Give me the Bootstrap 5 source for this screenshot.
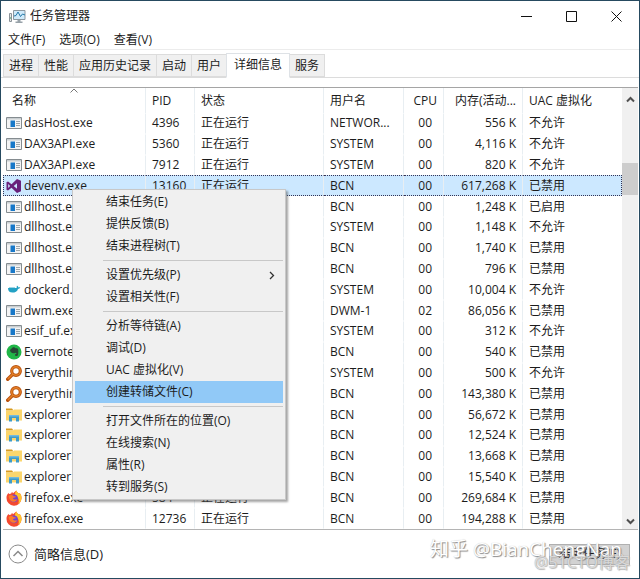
<!DOCTYPE html>
<html lang="zh-CN">
<head>
<meta charset="utf-8">
<meta name="viewport" content="width=device-width, initial-scale=1">
<title>任务管理器</title>
<link href="https://cdn.jsdelivr.net/npm/bootstrap@5.3.0/dist/css/bootstrap.min.css" rel="stylesheet">
<style>
body{font:12px/16px "Open Sans","Noto Sans CJK SC",sans-serif;color:#1c1c1c;background:#fff}
svg{display:block;flex:none}
.tm-window{border:1px solid #264a60}
.tm-title{height:30px;padding-left:8px}
.tm-control{width:45px;height:29px;border:0;background:none;padding:0}
.tm-menubar{height:19px;padding-left:7px;gap:14px;border-bottom:1px solid #ececec}
.tm-menubar a{color:#1c1c1c}
.tm-tabs{height:28px;padding:0 2px;border-bottom:1px solid #dcdcdc}
.tm-tabs .nav-link{height:23px;padding:3px 5px 0;border:1px solid #dcdcdc;border-right-width:0;border-radius:0;color:#1c1c1c;background:#f0f0f0;margin:0;white-space:nowrap}
.tm-tabs .nav-item:last-child .nav-link{border-right-width:1px}
.tm-tabs .nav-link.active{height:25px;padding:3px 7px 0;background:#fff;border-bottom-color:#fff;border-right-width:1px;color:#1c1c1c;margin-bottom:-1px}
.tm-list{margin:9px 1px 0 2px;border-top:1px solid #a5a5a5;border-bottom:1px solid #b4b4b4}
.tm-table{table-layout:fixed;height:441px;border-collapse:separate;border-spacing:0}
.tm-table th,.tm-table td{padding:0 6px;border-right:1px solid #e8eef2;white-space:nowrap;overflow:hidden;font-weight:400}
.tm-table thead th{height:25px;position:relative}
.tm-table thead th:first-child{padding-left:9px}
.tm-table td{border-top:1px dotted transparent;border-bottom:1px dotted transparent}
.tm-table td:first-child{padding-left:2px;border-left:1px dotted transparent}
.tm-table td:last-child,.tm-table th:last-child{border-right-color:transparent}
.tm-table .selected td{background:#cce8ff;border-top-color:#335;border-bottom-color:#335}
.tm-table .selected td:first-child{border-left-color:#335}
.tm-table .selected td:last-child{border-right:1px dotted #335}
.c-name{width:143px}.c-pid{width:49px}.c-state{width:129px}.c-user{width:80px}.c-cpu{width:40px}.c-mem{width:79px}
.tm-table .cpu-cell{padding-right:11px}
.tm-proc{gap:2px}
.tm-sort{position:absolute;left:67px;top:0}
.tm-scroll{flex:none;width:16px;background:#f0f0f0}
.tm-thumb{height:32px;margin-top:60px;background:#cdcdcd}
.tm-footer{height:48px;padding:0 9px 0 7px}
.tm-fewer{font-size:13px;border:0;background:none;padding:0;color:#1c1c1c;gap:6px}
.tm-end{width:81px;height:21px;padding:0;border:1px solid #b0b0b0;background:#d2d2d2;color:#1c1c1c}
.tm-context{left:71px;top:188px;width:214px;padding:1px 2px;background:#f0f0f0;border:1px solid #c8c8c8;box-shadow:2px 2px 2px #5558;z-index:3}
.tm-context button{height:22px;padding:0 8px 0 31px;border:0;background:none;color:#1c1c1c}
.tm-context button.current{background:#91c9f7}
.tm-context hr{margin:3px 0 3px 28px;border-color:#c8c8c8;opacity:1}
.tm-mark{right:17px;bottom:15px;font-size:19px;line-height:28px;color:#fff;text-shadow:1px 1px 1px #888,0 0 1px #bbb;z-index:2;white-space:nowrap}
.tm-mark-two{right:9px;bottom:5px;font-size:16px;line-height:22px;color:#fffa;text-shadow:0 0 1px #888,1px 1px 1px #bbb;z-index:2;white-space:nowrap}
</style>
<script src="https://cdn.jsdelivr.net/npm/bootstrap@5.3.0/dist/js/bootstrap.bundle.min.js"></script>
</head>
<body>
<svg class="d-none" aria-hidden="true">
<symbol id="i-app" viewBox="0 0 16 14"><path d="M.5 1.500h15v11H.5z" fill="#f4f4f4" stroke="#858c90"/><path d="M1 2h14v1.500H1z" fill="#c9ced1"/><path d="M4.500 4.500h4.500v6.500H4.500z" fill="#1878c8"/><path d="M10 5.500h4M10 7.500h4M10 9.500h4" stroke="#9ea7ac"/></symbol>
<symbol id="i-vs" viewBox="0 0 16 14"><path d="M11 0l4 1.700v10.600L11 14 5.500 8.700 2 11.500.5 10.700V3.300L2 2.500l3.500 2.800zM11 4.200L7.700 7 11 9.800zM2.200 5v4L4.100 7z" fill="#68217a" fill-rule="evenodd"/></symbol>
<symbol id="i-docker" viewBox="0 0 16 14"><path d="M2 5h8.500c.5-.9.400-1.300.1-1.900l.7-.3c.7.500 1 1 1 1.600.8-.2 1.500-.1 2 .2-.5.900-1.300 1.300-2.300 1.300C11.300 8.500 9 9.500 6.500 9.500 3.500 9.500 2 8 2 5z" fill="#23a1c4"/><path d="M3 4h6v1H3z" fill="#9fd6e6"/></symbol>
<symbol id="i-ever" viewBox="0 0 16 16"><circle cx="8" cy="8" r="7.500" fill="#20b648"/><path d="M4 6l2.600-2.400C8 3 9 3.600 9.500 4.200c1.800 0 2.600.4 2.700 1.500.3 2.300.1 4.500-.5 5.700-.5 1-2.600 1-2.700-.4 0-1 .8-1.200 1.500-1 .1-.8-.5-1.100-1.300-1.300-.4.800-1.700.7-3 .3C4.900 8.700 4.200 7.500 4 6z" fill="#284736"/></symbol>
<symbol id="i-every" viewBox="0 0 16 16"><path d="M7 9l-5.300 5.200" stroke="#b8510e" stroke-width="3.400" stroke-linecap="round"/><circle cx="10" cy="6" r="4.300" fill="#fff" stroke="#b8510e" stroke-width="3.200"/><circle cx="10" cy="6" r="4.300" fill="none" stroke="#e58028" stroke-width="1.400"/><path d="M7 9l-5.200 5" stroke="#e58028" stroke-width="1.400"/></symbol>
<symbol id="i-folder" viewBox="0 0 16 15"><path d="M0 1h6l1.500 2H0z" fill="#d79b22"/><path d="M0 3h7l1-1h8v11H0z" fill="#fbd66d"/><path d="M3 14V7.500h10V14h-3v-3.500H6V14z" fill="#3f9bc9"/><path d="M3 7.500h10V9H3z" fill="#72b9dc"/></symbol>
<symbol id="i-fox" viewBox="0 0 16 16"><path d="M1 5l1.400-2 .8 1 2-.5L6 1.700l1 1.500L10.300.5c.4 1.500 1.500 2 2.800 3.200l.6-.7C15 4.500 15.700 6.300 15.500 8.400A7.500 7.500 0 0 1 .5 8C.4 7 .6 6 1 5z" fill="#f4492f"/><path d="M10.300.5c.4 1.500 1.500 2 2.800 3.200l.6-.7c1.300 1.500 2 3.300 1.800 5.400-.2 2.500-1.600 4.500-3.300 5.700C13.500 11 13 7 9 5c0-2 .3-3.200 1.300-4.500z" fill="#ffc52c"/><circle cx="8" cy="8.400" r="3.800" fill="#7444cf"/><path d="M2.500 6c2-1.400 4-1 5.500.2l2 .3c-.5 1.200-2 1-3 1.500.3 1.800 2.800 2 4.200 1-.6 2.600-3.500 3.600-5.700 2.200C3.600 10 3 8 2.500 6z" fill="#fb7b2b"/></symbol>
</svg>
<main class="tm-window position-relative d-flex flex-column min-vh-100">
<header class="tm-title d-flex align-items-center">
<svg width="17" height="15" viewBox="0 0 17 15"><path d="M.5 4.500h2v8h-2z" fill="#e8e8e8" stroke="#8a9298"/><path d="M1 9h1" stroke="#2b9b50"/><path d="M4.500 1.500h11.500v9H4.500z" fill="#cfeafa" stroke="#8b979f"/><path d="M5 7l2-.5L9 3l2.500 4.500L13.500 5 16 6" fill="none" stroke="#2479a8"/><path d="M8.500 11v1.500H6.500v1.500h7v-1.500h-2V11z" fill="#98a2a9"/></svg>
<span class="ms-1 flex-fill">任务管理器</span>
<button class="tm-control d-flex align-items-center justify-content-center" aria-label="最小化"><svg width="11" height="11"><path d="M0 5.500h11" stroke="#111"/></svg></button>
<button class="tm-control d-flex align-items-center justify-content-center" aria-label="最大化"><svg width="11" height="11"><path d="M.5.5h10v10H.5z" fill="none" stroke="#111"/></svg></button>
<button class="tm-control d-flex align-items-center justify-content-center" aria-label="关闭"><svg width="11" height="11"><path d="M.5.5l10 10m0-10l-10 10" stroke="#111"/></svg></button>
</header>
<nav class="tm-menubar d-flex align-items-center"><a class="text-decoration-none" href="#">文件(F)</a><a class="text-decoration-none" href="#">选项(O)</a><a class="text-decoration-none" href="#">查看(V)</a></nav>
<ul class="tm-tabs nav nav-tabs flex-nowrap align-items-end">
<li class="nav-item"><a class="nav-link" href="#">进程</a></li><li class="nav-item"><a class="nav-link" href="#">性能</a></li><li class="nav-item"><a class="nav-link" href="#">应用历史记录</a></li><li class="nav-item"><a class="nav-link" href="#">启动</a></li><li class="nav-item"><a class="nav-link" href="#">用户</a></li><li class="nav-item"><a class="nav-link active" href="#" aria-current="page">详细信息</a></li><li class="nav-item"><a class="nav-link border-start-0" href="#">服务</a></li>
</ul>
<section class="tm-list d-flex">
<div class="flex-fill">
<table class="tm-table w-100">
<colgroup><col class="c-name"><col class="c-pid"><col class="c-state"><col class="c-user"><col class="c-cpu"><col class="c-mem"><col></colgroup>
<thead><tr><th>名称<svg class="tm-sort" width="8" height="5"><path d="M.5 4.500L4 1l3.500 3.500" fill="none" stroke="#777"/></svg></th><th>PID</th><th>状态</th><th>用户名</th><th class="text-end">CPU</th><th class="text-end">内存(活动...</th><th>UAC 虚拟化</th></tr></thead>
<tbody id="rows"></tbody>
</table>
</div>
<div class="tm-scroll d-flex flex-column align-items-center py-1">
<svg class="mt-1" width="9" height="7"><path d="M1 5.500L4.500 2 8 5.500" fill="none" stroke="#505050" stroke-width="2"/></svg>
<div class="tm-thumb w-100"></div>
<svg class="mt-auto" width="9" height="7"><path d="M1 1.500L4.500 5 8 1.500" fill="none" stroke="#505050" stroke-width="2"/></svg>
</div>
</section>
<footer class="tm-footer d-flex align-items-center justify-content-between">
<button class="tm-fewer d-flex align-items-center"><svg width="20" height="20"><circle cx="10" cy="10" r="9" fill="none" stroke="#8a8a8a"/><path d="M5.500 12L10 7.500l4.500 4.500" fill="none" stroke="#8a8a8a" stroke-width="1.500"/></svg>简略信息(D)</button>
<button class="tm-end">结束任务(E)</button>
</footer>
<div class="tm-mark position-absolute">知乎 @BianChengNan</div>
<div class="tm-mark-two position-absolute">@51CTO博客</div>
<div class="tm-context position-absolute d-flex flex-column" role="menu">
<button class="text-start">结束任务(E)</button><button class="text-start">提供反馈(B)</button><button class="text-start">结束进程树(T)</button><hr>
<button class="d-flex align-items-center justify-content-between">设置优先级(P)<svg width="6" height="9"><path d="M1 1l3.500 3.500L1 8" fill="none" stroke="#333" stroke-width="1.300"/></svg></button><button class="text-start">设置相关性(F)</button><hr>
<button class="text-start">分析等待链(A)</button><button class="text-start">调试(D)</button><button class="text-start">UAC 虚拟化(V)</button><button class="text-start current">创建转储文件(C)</button><hr>
<button class="text-start">打开文件所在的位置(O)</button><button class="text-start">在线搜索(N)</button><button class="text-start">属性(R)</button><button class="text-start">转到服务(S)</button>
</div>
</main>
<script>
const processes = [
 ['app','dasHost.exe','4396','NETWOR...','00','556','不允许'],
 ['app','DAX3API.exe','5360','SYSTEM','00','4,116','不允许'],
 ['app','DAX3API.exe','7912','SYSTEM','00','820','不允许'],
 ['vs','devenv.exe','13160','BCN','00','617,268','已禁用'],
 ['app','dllhost.exe','','BCN','00','1,248','已启用'],
 ['app','dllhost.exe','','SYSTEM','00','1,148','不允许'],
 ['app','dllhost.exe','','BCN','00','1,740','已禁用'],
 ['app','dllhost.exe','','BCN','00','796','已禁用'],
 ['docker','dockerd.exe','','SYSTEM','00','10,004','不允许'],
 ['app','dwm.exe','','DWM-1','02','86,056','已禁用'],
 ['app','esif_uf.exe','','SYSTEM','00','312','不允许'],
 ['ever','Evernote.exe','','BCN','00','540','已禁用'],
 ['every','Everything.exe','','SYSTEM','00','500','不允许'],
 ['every','Everything.exe','','BCN','00','143,380','已禁用'],
 ['folder','explorer.exe','','BCN','00','56,672','已禁用'],
 ['folder','explorer.exe','','BCN','00','12,524','已禁用'],
 ['folder','explorer.exe','','BCN','00','13,668','已禁用'],
 ['folder','explorer.exe','','BCN','00','15,540','已禁用'],
 ['fox','firefox.exe','584','BCN','00','269,684','已禁用'],
 ['fox','firefox.exe','12736','BCN','00','194,288','已禁用']
];
document.getElementById('rows').innerHTML = processes.map(([icon,name,pid,user,cpu,mem,uac]) =>
 `<tr class="${icon==='vs'?'selected':''}"><td><div class="tm-proc d-flex align-items-center"><svg width="16" height="16"><use href="#i-${icon}"/></svg>${name}</div></td><td>${pid}</td><td>${pid?'正在运行':''}</td><td>${user}</td><td class="text-end cpu-cell">${cpu}</td><td class="text-end">${mem} K</td><td>${uac}</td></tr>`).join('');
</script>
</body>
</html>
